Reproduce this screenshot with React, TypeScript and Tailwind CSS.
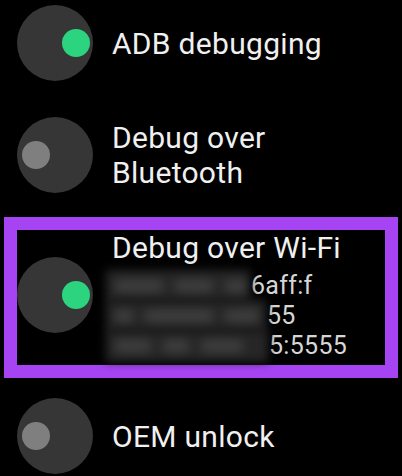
import React from 'react';

const font = { fontFamily: 'Roboto, "Noto Sans", sans-serif' };

function Toggle({ on }: { on: boolean }) {
  return (
    <div
      className={`w-[76px] h-[76px] shrink-0 rounded-full bg-[#363636] flex items-center ${
        on ? 'justify-end pr-[3px]' : 'justify-start pl-[5px]'
      }`}
    >
      <div className={`w-[28px] h-[28px] rounded-full ${on ? 'bg-[#2dd47f]' : 'bg-[#7f7f7f]'}`} />
    </div>
  );
}

// redacted part of the address, blurred like in the screenshot
function AddrLine({ blurW, blobs, text }: { blurW: string; blobs: string[]; text: string }) {
  return (
    <div className="flex items-center h-[30px]">
      <div className={`${blurW} h-[32px] -ml-[6px] pl-[8px] bg-[#262626] blur-[5px] flex items-center gap-[10px]`}>
        {blobs.map((w, i) => (
          <div key={i} className={`${w} h-[14px] rounded-full bg-[#3c3c3c]`} />
        ))}
      </div>
      <span className="ml-[1px] text-[25px] leading-[30px] tracking-[0.3px] text-[#d6d6d6]">{text}</span>
    </div>
  );
}

export default function App() {
  return (
    <div className="w-[402px] h-[476px] bg-black overflow-hidden text-[#f0f0f0]" style={font}>
      {/* ADB debugging */}
      <div className="flex items-center gap-[19px] pl-[17px] pt-[5px]">
        <Toggle on />
        <span className="text-[30px] leading-[35px] tracking-[0.3px]">ADB debugging</span>
      </div>

      {/* Debug over Bluetooth */}
      <div className="flex items-center gap-[19px] pl-[17px] mt-[36px]">
        <Toggle on={false} />
        <span className="text-[30px] leading-[35px] tracking-[0.3px]">
          Debug over
          <br />
          Bluetooth
        </span>
      </div>

      {/* Debug over Wi-Fi (highlighted) */}
      <div className="mx-[4px] mt-[24px] h-[161px] border-[13px] border-[#a644f4] flex items-start gap-[19px]">
        <div className="mt-[27px]">
          <Toggle on />
        </div>
        <div>
          <div className="text-[30px] leading-[35px] tracking-[0.3px]">Debug over Wi-Fi</div>
          <div className="mt-[6px]">
            <AddrLine blurW="w-[144px]" blobs={['w-[50px]', 'w-[40px]', 'w-[24px]']} text="6aff:f" />
            <AddrLine blurW="w-[160px]" blobs={['w-[20px]', 'w-[70px]', 'w-[36px]']} text="55" />
            <AddrLine blurW="w-[162px]" blobs={['w-[38px]', 'w-[28px]', 'w-[44px]']} text="5:5555" />
          </div>
        </div>
      </div>

      {/* OEM unlock */}
      <div className="flex items-center gap-[19px] pl-[17px] mt-[20px]">
        <Toggle on={false} />
        <span className="text-[30px] leading-[35px] tracking-[0.3px]">OEM unlock</span>
      </div>
    </div>
  );
}
